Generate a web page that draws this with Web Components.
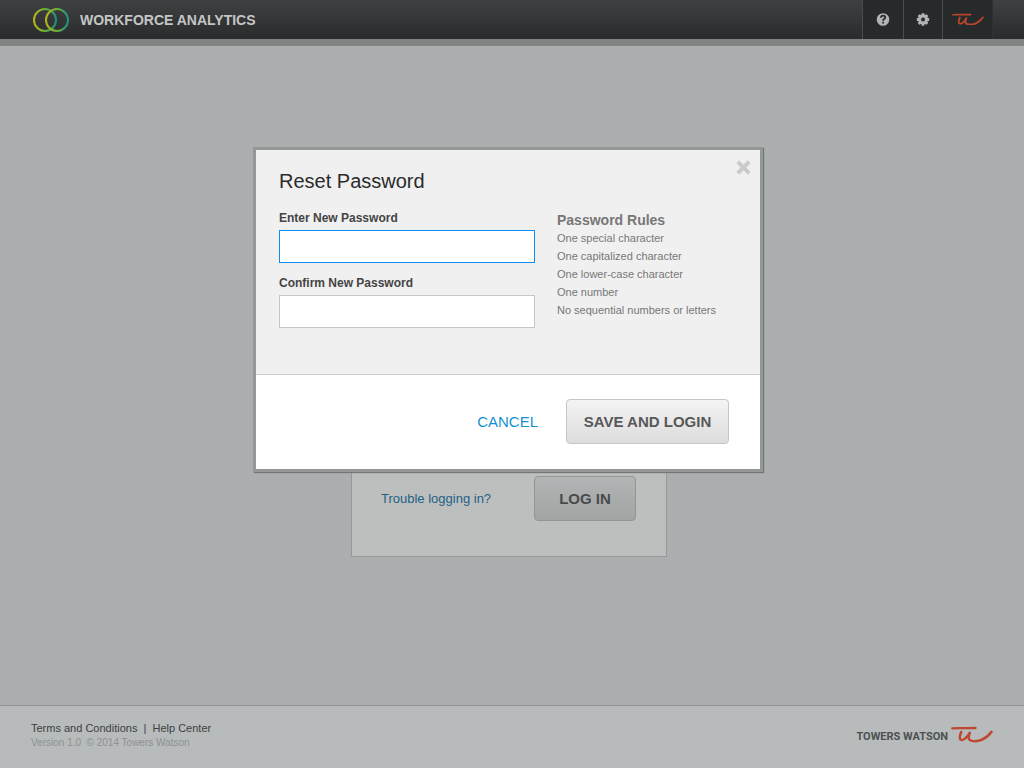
<!DOCTYPE html>
<html lang="en">
<head>
<meta charset="utf-8">
<title>Workforce Analytics</title>
<style>
  body {
    margin: 0;
    font-family: "Liberation Sans", Arial, sans-serif;
    font-size: 12px;
    color: #444;
    background: #abafaf;
  }
</style>
</head>
<body>
<wa-app></wa-app>

<template id="tw-mark">
  <style>
    :host { display: block; color: #b9462c; }
    svg { display: block; width: 100%; height: auto; }
  </style>
  <svg viewBox="0 0 42 17" fill="none" stroke="currentColor" stroke-linecap="round" stroke-linejoin="round" aria-hidden="true">
    <path d="M1.3 2.3C5 1.7 12 2.3 24.5 2" stroke-width="2.3"/>
    <path d="M10.2 6C9.2 8.6 8 12.8 9.8 13.7C12.6 14.8 16.6 10.6 18.8 6.8C17.4 10 16.8 13.6 20 14.6C27.5 16.8 36 12.4 40.5 5.8" stroke-width="2.5"/>
  </svg>
</template>

<template id="wa-header">
  <style>
    :host { display: block; }
    header {
      display: flex;
      justify-content: space-between;
      height: 39px;
      padding: 0 31px 0 33px;
      background: linear-gradient(#3e4041, #292b2c);
      border-bottom: 7px solid #828482;
    }
    .brand { display: flex; align-items: center; gap: 11px; color: #c4c6c6; text-decoration: none; }
    .brand svg { width: 36px; height: 24px; }
    h1 { margin: 0; font-size: 14px; line-height: 16px; font-weight: bold; padding-top: 1px; }
    nav { display: flex; border-right: 1px solid #2d3132; }
    nav > * {
      box-sizing: border-box;
      display: flex;
      align-items: center;
      justify-content: center;
      margin: 0;
      padding: 0;
      border: 0;
      border-left: 1px solid #494d4e;
      background: #262a2b;
      width: 39px;
    }
    nav > :first-child { width: 41px; }
    nav > a { width: 50px; }
    nav svg { width: 14px; height: 14px; }
    tw-mark { width: 32px; padding-bottom: 1px; }
  </style>
  <header>
    <a class="brand" href="#">
      <svg viewBox="0 0 36 24" fill="none" stroke-width="2" aria-hidden="true">
        <defs>
          <linearGradient id="ring">
            <stop offset="0" stop-color="#b5b51b"/>
            <stop offset=".5" stop-color="#6fae35"/>
            <stop offset="1" stop-color="#208f80"/>
          </linearGradient>
        </defs>
        <circle cx="12" cy="12" r="11" stroke="url(#ring)"/>
        <circle cx="24" cy="12" r="11" stroke="url(#ring)"/>
      </svg>
      <h1>WORKFORCE ANALYTICS</h1>
    </a>
    <nav>
      <button type="button" aria-label="Help">
        <svg viewBox="0 0 14 14" aria-hidden="true">
          <circle cx="7" cy="6.5" r="6.3" fill="#b1b4b4"/>
          <path d="M4.9 4.8C5 3.3 6 2.7 7.1 2.7C8.3 2.7 9.2 3.4 9.2 4.5C9.2 6.1 7.1 6 7.1 7.7" fill="none" stroke="#262a2b" stroke-width="1.8"/>
          <rect x="6.2" y="8.7" width="1.8" height="1.8" fill="#262a2b"/>
        </svg>
      </button>
      <button type="button" aria-label="Settings">
        <svg viewBox="0 0 14 14" aria-hidden="true">
          <g fill="#b1b4b4">
            <circle cx="7" cy="6.5" r="4.9"/>
            <rect x="5.5" y=".3" width="3" height="12.4" rx=".6"/>
            <rect x="5.5" y=".3" width="3" height="12.4" rx=".6" transform="rotate(45 7 6.5)"/>
            <rect x="5.5" y=".3" width="3" height="12.4" rx=".6" transform="rotate(90 7 6.5)"/>
            <rect x="5.5" y=".3" width="3" height="12.4" rx=".6" transform="rotate(135 7 6.5)"/>
          </g>
          <circle cx="7" cy="6.5" r="2" fill="#262a2b"/>
        </svg>
      </button>
      <a href="#" aria-label="Towers Watson"><tw-mark></tw-mark></a>
    </nav>
  </header>
</template>

<template id="wa-button">
  <style>
    :host { display: block; }
    button {
      display: block;
      width: 100%;
      height: 45px;
      padding: 0 16px;
      border: 1px solid var(--button-edge, #c5c7c7);
      border-radius: 4px;
      background: linear-gradient(var(--button-top, #f4f4f4), var(--button-bottom, #dcdcdc));
      color: var(--button-ink, #585858);
      font: bold 15px/18px "Liberation Sans", Arial, sans-serif;
      white-space: nowrap;
    }
  </style>
  <button type="button"><slot></slot></button>
</template>

<template id="wa-login-card">
  <style>
    :host {
      box-sizing: border-box;
      display: flex;
      flex-direction: column;
      justify-content: flex-end;
      width: 316px;
      min-height: 410px;
      padding: 0 30px 35px 29px;
      border: 1px solid #959999;
      background: #bdbfbe;
    }
    .row { display: flex; align-items: center; justify-content: space-between; }
    a { color: #1f6187; font-size: 13px; line-height: 16px; text-decoration: none; }
    wa-button {
      width: 102px;
      --button-edge: #929595;
      --button-top: #b2b5b5;
      --button-bottom: #a2a4a4;
      --button-ink: #484b4b;
    }
  </style>
  <div class="row">
    <a href="#">Trouble logging in?</a>
    <wa-button>LOG IN</wa-button>
  </div>
</template>

<template id="wa-field">
  <style>
    :host { display: block; }
    label { display: block; font-size: 12px; line-height: 16px; font-weight: bold; color: #444; margin-bottom: 4px; }
    input {
      box-sizing: border-box;
      display: block;
      width: 100%;
      height: 33px;
      padding: 0 8px;
      border: 1px solid #c0c8c8;
      border-radius: 0;
      outline: 0;
      background: #fff;
      font: 13px "Liberation Sans", Arial, sans-serif;
    }
    :host([current]) input { border-color: #0c8cf5; }
  </style>
  <label for="box"><slot></slot></label>
  <input id="box" type="password">
</template>

<template id="wa-dialog">
  <style>
    :host {
      box-sizing: border-box;
      display: block;
      width: 510px;
      border: 3px solid #959796;
      box-shadow: 1px 1px 1px #747777;
      background: #fff;
      position: relative;
    }
    .body { padding: 19px 23px 46px; background: #f0f0f0; border-bottom: 1px solid #cfcfcf; }
    h2 { margin: 0 0 17px; font-size: 20px; line-height: 24px; font-weight: normal; color: #2b2b2b; }
    .columns { display: grid; grid-template-columns: 256px 1fr; gap: 22px; }
    .fields { display: grid; gap: 12px; align-content: start; }
    .rules { padding-top: 1px; }
    h3 { margin: 0; font-size: 14px; line-height: 18px; color: #777; }
    ul { margin: 0; padding: 0; list-style: none; font-size: 11px; line-height: 18px; color: #777; white-space: nowrap; }
    .actions { display: flex; justify-content: flex-end; align-items: center; gap: 28px; padding: 24px 31px 25px; }
    .cancel { color: #1592d0; font-size: 15px; line-height: 18px; text-decoration: none; }
    wa-button { width: 163px; }
    .close { position: absolute; top: 10px; right: 9px; width: 15px; height: 15px; padding: 0; border: 0; background: none; }
    .close svg { display: block; width: 15px; height: 15px; }
  </style>
  <section role="dialog" aria-labelledby="title">
    <div class="body">
      <h2 id="title">Reset Password</h2>
      <div class="columns">
        <div class="fields">
          <wa-field current>Enter New Password</wa-field>
          <wa-field>Confirm New Password</wa-field>
        </div>
        <div class="rules">
          <h3>Password Rules</h3>
          <ul>
            <li>One special character</li>
            <li>One capitalized character</li>
            <li>One lower-case character</li>
            <li>One number</li>
            <li>No sequential numbers or letters</li>
          </ul>
        </div>
      </div>
    </div>
    <div class="actions">
      <a class="cancel" href="#">CANCEL</a>
      <wa-button>SAVE AND LOGIN</wa-button>
    </div>
    <button class="close" type="button" aria-label="Close">
      <svg viewBox="0 0 15 15" aria-hidden="true">
        <path d="M3.2 3.2L11.8 11.8M11.8 3.2L3.2 11.8" stroke="#cacaca" stroke-width="4" stroke-linecap="square"/>
      </svg>
    </button>
  </section>
</template>

<template id="wa-footer">
  <style>
    :host { display: block; }
    footer {
      box-sizing: border-box;
      display: flex;
      justify-content: space-between;
      align-items: flex-start;
      min-height: 63px;
      padding: 15px 31px 0;
      border-top: 1px solid #8f9393;
      background: #b7bbbb;
    }
    p { margin: 0; line-height: 14px; white-space: pre; }
    .links { font-size: 11px; color: #3b3f3f; }
    a { color: inherit; text-decoration: none; }
    .legal { font-size: 10px; line-height: 16px; color: #8d9191; }
    .owner { display: flex; gap: 3px; padding-top: 5px; }
    .name { padding-top: 4px; font: bold 11px/14px Roboto, "Liberation Sans", sans-serif; color: #4c5052; }
    tw-mark { width: 42px; color: #bf4830; }
  </style>
  <footer>
    <div>
      <p class="links"><a href="#">Terms and Conditions</a>  |  <a href="#">Help Center</a></p>
      <p class="legal">Version 1.0  © 2014 Towers Watson</p>
    </div>
    <div class="owner">
      <span class="name">TOWERS WATSON</span>
      <tw-mark></tw-mark>
    </div>
  </footer>
</template>

<template id="wa-app">
  <style>
    :host { display: grid; grid-template-rows: auto 1fr auto; min-height: 100vh; position: relative; }
    main { display: flex; justify-content: center; align-items: flex-start; padding: 101px 6px 40px 0; background: #abafaf; }
    .overlay { position: absolute; inset: 0; display: flex; justify-content: center; align-items: flex-start; padding: 147px 8px 0 0; }
  </style>
  <wa-header></wa-header>
  <main><wa-login-card></wa-login-card></main>
  <wa-footer></wa-footer>
  <div class="overlay"><wa-dialog></wa-dialog></div>
</template>

<script>
  const names = ["tw-mark", "wa-header", "wa-button", "wa-login-card", "wa-field", "wa-dialog", "wa-footer", "wa-app"];
  for (const name of names) {
    const template = document.getElementById(name);
    customElements.define(name, class extends HTMLElement {
      constructor() {
        super();
        this.attachShadow({ mode: "open" }).append(template.content.cloneNode(true));
      }
    });
  }
</script>
</body>
</html>
